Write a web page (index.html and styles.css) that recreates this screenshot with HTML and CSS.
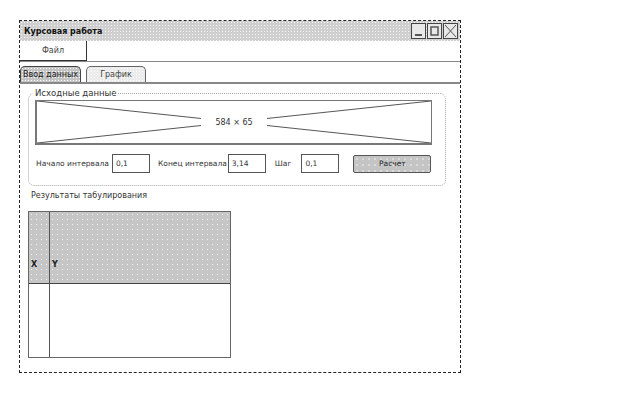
FILE: index.html
```html
<!DOCTYPE html>
<html>
<head>
    <meta charset="UTF-8">
    <title>Курсовая работа</title>
    <link rel="stylesheet" href="styles.css">
</head>
<body>
    <div class="win">
        <div class="title">
            <span class="ttl">Курсовая работа</span>
            <div class="wbtns">
                <span class="wb"><svg width="13" height="14" viewBox="0 0 13 14"><path d="M3 11h7" stroke="#555" stroke-width="2"/></svg></span>
                <span class="wb"><svg width="13" height="14" viewBox="0 0 13 14"><rect x="3" y="3" width="7" height="8" fill="none" stroke="#555" stroke-width="1.5"/></svg></span>
                <span class="wb"><svg width="13" height="14" viewBox="0 0 13 14"><path d="M1 1l11 12M12 1L1 13" stroke="#555" stroke-width="1"/></svg></span>
            </div>
        </div>
        <div class="menu">
            <span class="mi">Файл</span>
        </div>
        <div class="tabs">
            <span class="tab act">Ввод данных</span>
            <span class="tab">График</span>
        </div>
        <div class="body">
            <fieldset class="grp">
                <legend>Исходные данные</legend>
                <div class="ph">
                    <svg class="phx" viewBox="0 0 397 42" preserveAspectRatio="none">
                        <path d="M0 0L397 42M397 0L0 42" stroke="#555" stroke-width="1"/>
                    </svg>
                    <span class="phl">584 × 65</span>
                </div>
                <div class="row">
                    <label>Начало интервала</label>
                    <span class="inp">0,1</span>
                    <label class="l2">Конец интервала</label>
                    <span class="inp">3,14</span>
                    <label class="l3">Шаг</label>
                    <span class="inp">0,1</span>
                    <span class="btn">Расчет</span>
                </div>
            </fieldset>
            <p class="res">Результаты табулирования</p>
            <div class="tbl">
                <div class="col cx">
                    <div class="th">X</div>
                    <div class="td"></div>
                </div>
                <div class="col cy">
                    <div class="th">Y</div>
                    <div class="td"></div>
                </div>
            </div>
        </div>
    </div>
</body>
</html>
```

FILE: styles.css
```css
body {
    margin: 0;
    padding: 20px 0 0 19px;
    background: #fff;
    font-family: "DejaVu Sans", sans-serif;
    font-size: 8px;
    color: #333;
}

.win {
    width: 442px;
    height: 353px;
    border: 1px dashed #222;
    display: flex;
    flex-direction: column;
    box-sizing: border-box;
}

.title {
    height: 20px;
    display: flex;
    align-items: center;
    background-color: #cfcfcf;
    background-image: radial-gradient(#f4f4f4 0.6px, transparent 0.8px);
    background-size: 3px 3px;
    padding-left: 4px;
}

.ttl {
    font-weight: bold;
    font-size: 8px;
    color: #111;
    flex: 1;
}

.wbtns {
    display: flex;
    gap: 1px;
    margin-right: 2px;
}

.wb {
    width: 13px;
    height: 14px;
    border: 1px solid #444;
    background: #e8e8e8;
    display: block;
}

.wb svg {
    display: block;
}

.menu {
    height: 20px;
    border-bottom: 1px solid #888;
    display: flex;
}

.mi {
    width: 66px;
    border-right: 1px solid #333;
    border-bottom: 1px solid #333;
    display: flex;
    align-items: center;
    justify-content: center;
    color: #444;
}

.tabs {
    margin-top: 3px;
    height: 17px;
    border-bottom: 2px solid #888;
    display: flex;
    gap: 5px;
    align-items: flex-end;
}

.tab {
    width: 58px;
    height: 15px;
    border: 1px solid #666;
    border-bottom: 0;
    border-radius: 5px 5px 0 0;
    background-color: #ececec;
    background-image: radial-gradient(#fff 0.6px, transparent 0.8px);
    background-size: 3px 3px;
    display: flex;
    align-items: center;
    justify-content: center;
    color: #444;
    white-space: nowrap;
}

.tab.act {
    width: 59px;
    background-color: #c4c4c4;
    border-color: #444;
    color: #222;
}

.body {
    padding: 4px 14px 0 8px;
}

.grp {
    margin: 0;
    padding: 2px 13px 8px 6px;
    border: 1px dotted #aaa;
    border-radius: 6px;
    width: 418px;
    min-width: 0;
    height: 98px;
    box-sizing: border-box;
}

.grp legend {
    padding: 0 2px;
    margin-left: -2px;
    font-size: 8.5px;
    color: #333;
}

.ph {
    position: relative;
    height: 42px;
    border: 1px solid #777;
    border-width: 1px 1px 2px 2px;
    display: flex;
    align-items: center;
    justify-content: center;
}

.phx {
    position: absolute;
    left: 0;
    top: 0;
    width: 100%;
    height: 100%;
}

.phl {
    position: relative;
    background: #fff;
    padding: 0 14px;
    color: #333;
}

.row {
    display: flex;
    align-items: center;
    margin-top: 9px;
    padding-left: 1px;
    white-space: nowrap;
    font-size: 7.5px;
}

.row label {
    color: #333;
    margin-right: 3px;
}

.row .l2 {
    margin-left: 8px;
    margin-right: 1px;
}

.row .l3 {
    margin-left: 9px;
    margin-right: 10px;
}

.inp {
    width: 38px;
    height: 19px;
    border: 1px solid #555;
    box-sizing: border-box;
    display: flex;
    align-items: center;
    padding-left: 3px;
    color: #333;
    flex: none;
}

.btn {
    margin-left: 14px;
    width: 78px;
    height: 18px;
    box-sizing: border-box;
    border: 1px solid #555;
    border-radius: 2px;
    background-color: #c4c4c4;
    background-image: radial-gradient(#f4f4f4 0.6px, transparent 0.8px);
    background-size: 6px 6px;
    display: flex;
    align-items: center;
    justify-content: center;
    color: #222;
    flex: none;
}

.res {
    margin: 5px 0 0 3px;
    color: #333;
}

.tbl {
    margin-top: 11px;
    width: 203px;
    height: 147px;
    border: 1px solid #666;
    display: flex;
    box-sizing: border-box;
}

.col {
    display: flex;
    flex-direction: column;
}

.cx {
    width: 20px;
    border-right: 1px solid #555;
}

.cy {
    flex: 1;
}

.th {
    height: 72px;
    border-bottom: 1px solid #444;
    background-color: #c6c6c6;
    background-image: radial-gradient(#f2f2f2 0.6px, transparent 0.8px);
    background-size: 5px 5px;
    display: flex;
    align-items: flex-end;
    padding: 0 0 14px 2px;
    box-sizing: border-box;
    font-weight: bold;
    color: #222;
}

.td {
    flex: 1;
}
```
